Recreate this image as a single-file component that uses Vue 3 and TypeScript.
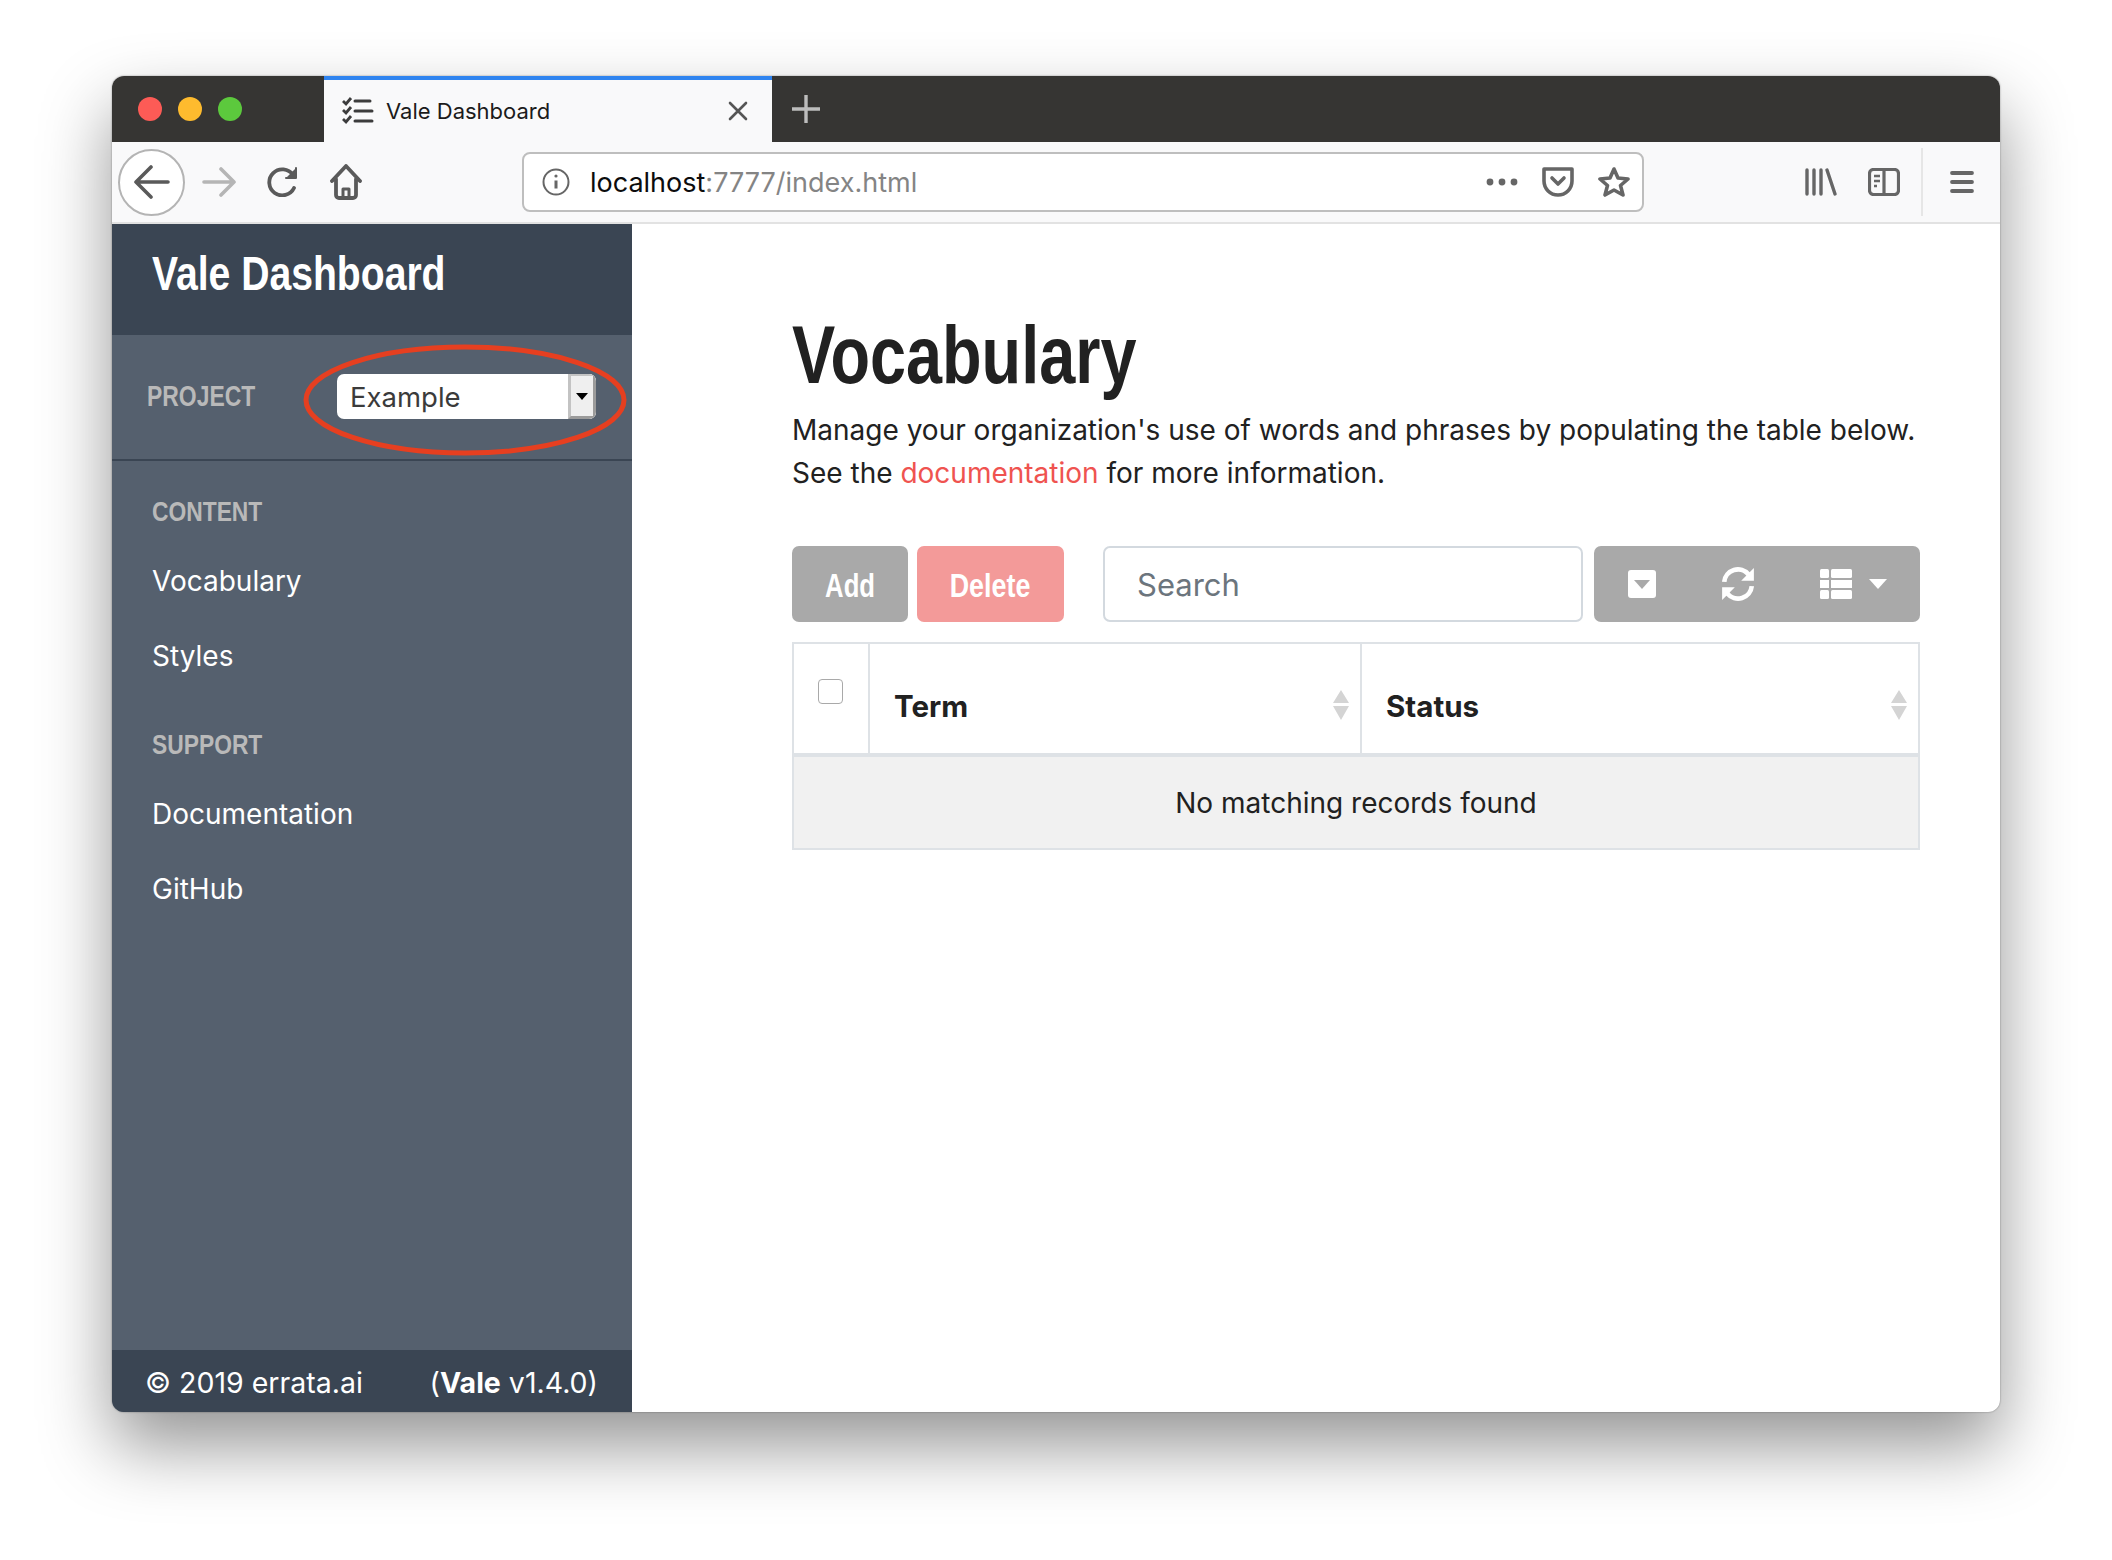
<script setup lang="ts">
// sidebar links, grouped by heading
const navGroups = [
  { title: 'CONTENT', links: ['Vocabulary', 'Styles'] },
  { title: 'SUPPORT', links: ['Documentation', 'GitHub'] },
]
const columns = ['Term', 'Status']
</script>

<template>
  <div class="page">
    <div class="window">
      <div class="titlebar">
        <div class="lights">
          <span class="light red"></span>
          <span class="light yellow"></span>
          <span class="light green"></span>
        </div>
        <div class="tab">
          <svg class="tab-icon" width="32" height="28" viewBox="0 0 32 28" fill="none" stroke="#3c3c3c">
            <path d="M1 4l3 3 5-6M1 13l3 3 5-6M1 22l3 3 5-6" stroke-width="2.8" />
            <path d="M13 4h15M13 14h17M13 24h17" stroke-width="3" stroke-linecap="round" />
          </svg>
          <span class="tab-title">Vale Dashboard</span>
          <svg class="tab-close" width="20" height="20" viewBox="0 0 20 20" stroke="#555" stroke-width="2.6" stroke-linecap="round">
            <path d="M2 2l16 16M18 2L2 18" />
          </svg>
        </div>
        <svg class="new-tab" width="28" height="28" viewBox="0 0 28 28" stroke="#bdbdbd" stroke-width="3.4">
          <path d="M14 0v28M0 14h28" />
        </svg>
      </div>

      <div class="toolbar">
        <div class="back">
          <svg width="36" height="34" viewBox="0 0 36 34" fill="none" stroke="#5a5a5a" stroke-width="3.6" stroke-linecap="round" stroke-linejoin="round">
            <path d="M34 17H3M17 2L2 17l15 15" />
          </svg>
        </div>
        <svg class="fwd" width="34" height="30" viewBox="0 0 34 30" fill="none" stroke="#b5b5b5" stroke-width="3.6" stroke-linecap="round" stroke-linejoin="round">
          <path d="M2 15h29M19 2l13 13-13 13" />
        </svg>
        <svg class="reload" width="32" height="30" viewBox="0 0 32 30" fill="none" stroke="#5a5a5a" stroke-width="3.8" stroke-linecap="round">
          <path d="M27 21a13 13 0 1 1-1-13" />
          <path d="M29 1v10H19" stroke-linejoin="round" fill="#5a5a5a" stroke-width="2" />
        </svg>
        <svg class="home" width="32" height="36" viewBox="0 0 32 36" fill="none" stroke="#5a5a5a" stroke-width="3.8" stroke-linejoin="round" stroke-linecap="round">
          <path d="M2 17L16 2l14 15M6 15v16a3 3 0 0 0 3 3h14a3 3 0 0 0 3-3V15" />
          <path d="M13 34v-9h6v9" stroke-width="3" />
        </svg>

        <div class="urlbar">
          <svg width="28" height="28" viewBox="0 0 28 28" fill="none" stroke="#666" stroke-width="2">
            <circle cx="14" cy="14" r="12.5" />
            <path d="M14 12.5v8" stroke-width="3" />
            <circle cx="14" cy="8" r="1.6" fill="#666" stroke="none" />
          </svg>
          <span class="url"><span class="host">localhost</span>:7777/index.html</span>
          <svg class="dots" width="32" height="8" viewBox="0 0 32 8" fill="#666">
            <circle cx="4" cy="4" r="3.4" />
            <circle cx="16" cy="4" r="3.4" />
            <circle cx="28" cy="4" r="3.4" />
          </svg>
          <svg class="pocket" width="32" height="30" viewBox="0 0 32 30" fill="none" stroke="#666" stroke-width="3.6" stroke-linejoin="round" stroke-linecap="round">
            <path d="M2 2h28v12a14 14 0 0 1-28 0z" />
            <path d="M10 11l6 6 6-6" />
          </svg>
          <svg class="star" width="32" height="32" viewBox="0 0 32 32" fill="none" stroke="#666" stroke-width="3.6" stroke-linejoin="round">
            <path d="M16 3l4 9 10 1-7.500 6.500L25 29l-9-5-9 5 2.500-9.500L2 13l10-1z" />
          </svg>
        </div>

        <svg class="library" width="32" height="28" viewBox="0 0 32 28" stroke="#666" stroke-width="3.4" stroke-linecap="round">
          <path d="M2 2v24M9 2v24M16 2v24M22 2l8 24" />
        </svg>
        <svg class="side-icon" width="32" height="28" viewBox="0 0 32 28" fill="none" stroke="#666" stroke-width="3.2">
          <rect x="1.500" y="1.500" width="29" height="25" rx="4" />
          <path d="M16 2v24" />
          <path d="M6 8h6M6 13h6M6 18h3" stroke-width="2.400" />
        </svg>
        <span class="tool-sep"></span>
        <svg class="menu" width="24" height="24" viewBox="0 0 24 24" stroke="#666" stroke-width="3.800" stroke-linecap="round">
          <path d="M2 3h20M2 12h20M2 21h20" />
        </svg>
      </div>

      <div class="body">
        <aside class="sidebar">
          <div class="brand"><span class="narrow">Vale Dashboard</span></div>
          <div class="project">
            <span class="project-label"><span class="narrow">PROJECT</span></span>
            <div class="select">
              <span class="select-value">Example</span>
              <span class="select-btn"><i class="select-arrow"></i></span>
            </div>
            <svg class="annotation" width="326" height="112" viewBox="0 0 326 112" fill="none">
              <ellipse cx="162" cy="56" rx="159" ry="53" stroke="#e63f20" stroke-width="5" />
            </svg>
          </div>
          <nav class="nav">
            <div v-for="group in navGroups" :key="group.title" class="nav-group">
              <div class="nav-title"><span class="narrow">{{ group.title }}</span></div>
              <a v-for="link in group.links" :key="link" class="nav-link">{{ link }}</a>
            </div>
          </nav>
          <div class="side-foot">
            <span>© 2019 errata.ai</span>
            <span>(<b>Vale</b> v1.4.0)</span>
          </div>
        </aside>

        <main class="main">
          <h1><span class="narrow">Vocabulary</span></h1>
          <p>
            Manage your organization's use of words and phrases by populating the table below.<br />
            See the <a class="doc-link">documentation</a> for more information.
          </p>

          <div class="actions">
            <button class="btn add"><span class="narrow">Add</span></button>
            <button class="btn del"><span class="narrow">Delete</span></button>
            <div class="search">Search</div>
            <div class="tools">
              <svg width="28" height="28" viewBox="0 0 28 28">
                <rect width="28" height="28" rx="3" fill="#fff" />
                <path d="M6 10h16l-8 9z" fill="#a9a9a9" />
              </svg>
              <svg width="34" height="36" viewBox="0 0 32 34" fill="none" stroke="#fff" stroke-width="4.4">
                <path d="M3 15a13 13 0 0 1 23-7M29 19a13 13 0 0 1-23 7" />
                <path d="M31 2v12H19zM1 32V20h12z" fill="#fff" stroke="none" />
              </svg>
              <span class="tools-columns">
                <svg width="32" height="30" viewBox="0 0 32 30" fill="#fff">
                  <rect width="9" height="9" rx="1.500" />
                  <rect x="11" width="21" height="9" rx="1.500" />
                  <rect y="11" width="9" height="8" />
                  <rect x="11" y="11" width="21" height="8" />
                  <rect y="21" width="9" height="9" rx="1.500" />
                  <rect x="11" y="21" width="21" height="9" rx="1.500" />
                </svg>
                <svg width="18" height="10" viewBox="0 0 18 10" fill="#fff"><path d="M0 0h18L9 10z" /></svg>
              </span>
            </div>
          </div>

          <table class="grid">
            <thead>
              <tr>
                <th class="check-col"><span class="checkbox"></span></th>
                <th v-for="col in columns" :key="col">
                  <span class="col-name">{{ col }}</span>
                  <svg class="sort" width="16" height="30" viewBox="0 0 16 30" fill="#d4d4d4">
                    <path d="M8 0l8 13H0zM0 16h16L8 30z" />
                  </svg>
                </th>
              </tr>
            </thead>
            <tbody>
              <tr>
                <td colspan="3">No matching records found</td>
              </tr>
            </tbody>
          </table>
        </main>
      </div>
    </div>
  </div>
</template>

<style>
html,
body {
  background: #fff;
}
</style>

<style scoped>
.page {
  width: 2112px;
  height: 1560px;
  padding: 76px 112px 0;
  box-sizing: border-box;
  font-family: Inter, "Liberation Sans", sans-serif;
  color: #212121;
}

/* no condensed face installed, so squeeze the bold one */
.narrow {
  display: inline-block;
  font-family: "Liberation Sans", sans-serif;
  font-weight: 700;
  transform: scaleX(0.8);
  transform-origin: left center;
  white-space: nowrap;
}

.window {
  width: 1888px;
  height: 1336px;
  display: flex;
  flex-direction: column;
  border-radius: 12px;
  overflow: hidden;
  background: #fff;
  box-shadow: 0 34px 70px rgba(0, 0, 0, 0.42), 0 0 2px rgba(0, 0, 0, 0.4);
}

.titlebar {
  height: 66px;
  flex: none;
  display: flex;
  align-items: center;
  background: #363533;
}

.lights {
  width: 212px;
  display: flex;
  gap: 16px;
  padding-left: 26px;
  box-sizing: border-box;
}

.light {
  width: 24px;
  height: 24px;
  border-radius: 50%;
}

.red { background: #fd5b56; }
.yellow { background: #febb2e; }
.green { background: #5cc93d; }

.tab {
  width: 448px;
  height: 66px;
  box-sizing: border-box;
  display: flex;
  align-items: center;
  padding: 0 24px 0 18px;
  background: #f9f9fa;
  border-top: 4px solid #2f84f0;
}

.tab-icon { margin-right: 12px; }

.tab-title {
  flex: 1;
  font-size: 22px;
  line-height: 24px;
  color: #1b1b1b;
}

.new-tab { margin-left: 20px; }

.toolbar {
  height: 82px;
  flex: none;
  box-sizing: border-box;
  display: flex;
  align-items: center;
  padding-left: 6px;
  background: #f9f9fa;
  border-bottom: 2px solid #e2e2e2;
}

.back {
  width: 67px;
  height: 67px;
  box-sizing: border-box;
  border: 2px solid #b4b4b4;
  border-radius: 50%;
  background: #fff;
  display: flex;
  align-items: center;
  justify-content: center;
  flex: none;
}

.fwd { margin-left: 17px; }
.reload { margin-left: 31px; }
.home { margin-left: 31px; }

.urlbar {
  width: 1122px;
  height: 60px;
  margin-left: 160px;
  box-sizing: border-box;
  display: flex;
  align-items: center;
  padding: 0 12px 0 18px;
  background: #fff;
  border: 2px solid #bebebe;
  border-radius: 8px;
  flex: none;
}

.url {
  flex: 1;
  margin-left: 20px;
  font-size: 27px;
  color: #848484;
}

.host { color: #0c0c0d; }
.pocket { margin-left: 24px; }
.star { margin-left: 24px; }
.library { margin-left: 161px; }
.side-icon { margin-left: 31px; }

.tool-sep {
  width: 2px;
  height: 68px;
  margin-left: 21px;
  background: #e6e6e6;
}

.menu { margin-left: 27px; }

.body {
  flex: 1;
  display: flex;
  min-height: 0;
}

.sidebar {
  width: 520px;
  flex: none;
  display: flex;
  flex-direction: column;
  background: #55606e;
  color: #fff;
}

.brand {
  height: 111px;
  box-sizing: border-box;
  padding: 21px 0 0 40px;
  background: #3a4553;
  font-size: 48px;
  line-height: 56px;
}

.brand .narrow { transform: scaleX(0.815); }

.project {
  position: relative;
  height: 126px;
  box-sizing: border-box;
  display: flex;
  align-items: center;
  padding-left: 35px;
  border-bottom: 2px solid #3a4553;
}

.project-label {
  width: 190px;
  font-size: 29px;
  line-height: 32px;
  margin-top: -2px;
  color: #b9b9b9;
}

.project-label .narrow { transform: scaleX(0.79); }

.select {
  width: 259px;
  height: 45px;
  margin-top: -1px;
  display: flex;
  background: #fff;
  border-radius: 7px;
  overflow: hidden;
  color: #3b3b3b;
}

.select-value {
  flex: 1;
  padding-left: 13px;
  font-size: 27.500px;
  line-height: 46px;
}

.select-btn {
  width: 28px;
  box-sizing: border-box;
  display: flex;
  align-items: center;
  justify-content: center;
  background: #efefef;
  border-left: 3px solid #c3c3c3;
  border-right: 3px solid #9b9b9b;
  border-top: 2px solid #c3c3c3;
  border-bottom: 3px solid #9b9b9b;
}

.select-arrow {
  border: 6px solid transparent;
  border-top: 7px solid #000;
  border-bottom: 0;
}

.annotation {
  position: absolute;
  left: 191px;
  top: 9px;
}

.nav {
  flex: 1;
  padding: 35px 40px 0;
}

.nav-group { margin-bottom: 37px; }

.nav-title {
  height: 30px;
  line-height: 30px;
  font-size: 28px;
  color: #b9b9b9;
}

.nav-title .narrow { transform: scaleX(0.815); }

.nav-link {
  display: block;
  height: 75px;
  line-height: 78px;
  font-size: 28px;
  color: #fff;
}

.nav-link:nth-child(2) { margin-top: 16px; }

.side-foot {
  height: 62px;
  box-sizing: border-box;
  display: flex;
  justify-content: space-between;
  align-items: center;
  padding: 2px 34px 0 33px;
  background: #3a4553;
  font-size: 28.500px;
}

.main {
  flex: 1;
  padding: 0 60px 0 160px;
}

h1 {
  margin: 85px 0 0;
  font-size: 82px;
  line-height: 90px;
  color: #212121;
}

h1 .narrow { transform: scaleX(0.79); }

p {
  margin: 9px 0 0;
  font-size: 28px;
  line-height: 43px;
  white-space: nowrap;
}

.doc-link { color: #ef5350; }

.actions {
  display: flex;
  height: 76px;
  margin-top: 51px;
}

.btn {
  height: 76px;
  border: 0;
  border-radius: 7px;
  color: #fff;
  font-size: 34px;
  padding: 3px 0 0;
}

.btn .narrow { transform-origin: center; }
.add .narrow { transform: scaleX(0.755); }
.del .narrow { transform: scaleX(0.79); }

.add {
  width: 116px;
  background: #a9a9a9;
}

.del {
  width: 147px;
  margin-left: 9px;
  background: #f39a99;
}

.search {
  width: 480px;
  box-sizing: border-box;
  margin-left: 39px;
  padding-left: 32px;
  border: 2px solid #d3d9df;
  border-radius: 7px;
  font-size: 31px;
  line-height: 73px;
  color: #6c757d;
}

.tools {
  width: 326px;
  margin-left: 11px;
  box-sizing: border-box;
  padding-left: 34px;
  display: flex;
  align-items: center;
  gap: 65px;
  background: #a9a9a9;
  border-radius: 7px;
}

.tools-columns {
  display: flex;
  align-items: center;
  gap: 17px;
}

.grid {
  width: 1128px;
  margin-top: 20px;
  table-layout: fixed;
  border-collapse: collapse;
  border: 2px solid #dee2e6;
}

th {
  position: relative;
  box-sizing: border-box;
  height: 112px;
  padding: 15px 0 0 24px;
  text-align: left;
  font-size: 29.500px;
  font-weight: 700;
  color: #212121;
  border-right: 2px solid #dee2e6;
  border-bottom: 4px solid #dee2e6;
}

th:nth-child(2) { width: 492px; }

.check-col {
  width: 76px;
  padding: 0;
}

.checkbox {
  position: absolute;
  left: 24px;
  top: 35px;
  width: 25px;
  height: 25px;
  box-sizing: border-box;
  border: 1px solid #a9a9a9;
  border-radius: 4px;
  background: #fff;
}

.sort {
  position: absolute;
  right: 11px;
  top: 46px;
}

td {
  height: 91px;
  padding: 0;
  text-align: center;
  font-size: 28px;
  background: #f1f1f1;
}
</style>
